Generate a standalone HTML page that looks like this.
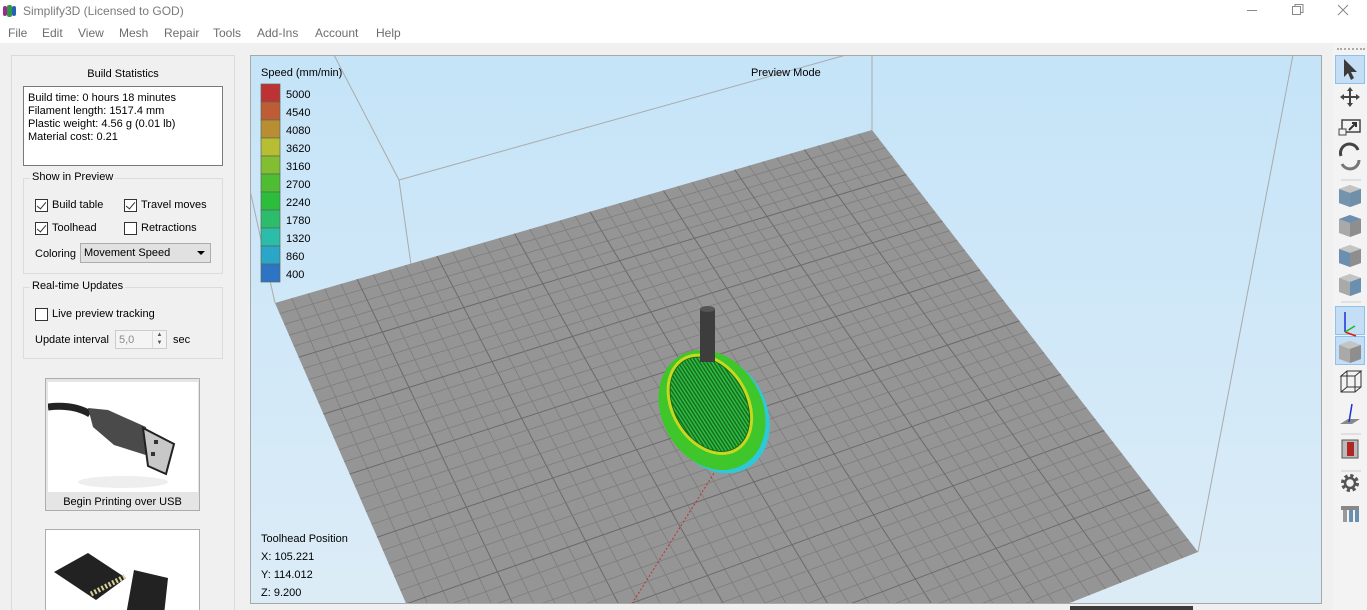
<!DOCTYPE html>
<html><head><meta charset="utf-8">
<style>
*{margin:0;padding:0;box-sizing:border-box}
html,body{width:1367px;height:610px;overflow:hidden}
body{background:#f0f0f0;font-family:"Liberation Sans",Arial,sans-serif;font-size:11px;color:#000;position:relative}
.abs{position:absolute}
.title{left:0;top:0;width:1367px;height:23px;background:#fff}
.menu{left:0;top:23px;width:1367px;height:20px;background:#fff;color:#6d6d6d;font-size:12px}
.menu span{position:absolute;top:3px}
.cb{position:absolute;width:13px;height:13px;border:1px solid #333;background:#fff}
.cb.on::after{content:"";position:absolute;left:3px;top:0px;width:4px;height:8px;border:solid #333;border-width:0 1.3px 1.3px 0;transform:rotate(40deg)}
.grp{position:absolute;border:1px solid #dcdcdc}
.grp .lg{position:absolute;top:-8px;left:6px;background:#f0f0f0;padding:0 2px;font-size:11px}
.tb{position:absolute;left:1335px;width:30px;height:29px}
.tb.hl{background:#c4dff5;border:1px solid #8fc1ea}
</style></head><body>
<div class="abs title">
 <svg class="abs" style="left:3px;top:4px" width="14" height="14"><rect x="0" y="2" width="4" height="10" rx="2" fill="#9b2a8c"/><rect x="4" y="1" width="5" height="12" rx="2" fill="#2f9a43"/><rect x="9" y="2" width="4" height="10" rx="2" fill="#2760b5"/></svg>
 <span class="abs" style="left:23px;top:4px;font-size:12px;color:#7a7a7a">Simplify3D (Licensed to GOD)</span>
 <div class="abs" style="left:1247px;top:10px;width:10px;height:1px;background:#888"></div>
 <svg class="abs" style="left:1292px;top:4px" width="12" height="12"><rect x="0.5" y="2.5" width="8" height="8" fill="none" stroke="#888"/><path d="M3 2.5V0.5H11V8.5H9" fill="none" stroke="#888"/></svg>
 <svg class="abs" style="left:1337px;top:4px" width="12" height="12"><path d="M1 1L11 11M11 1L1 11" stroke="#888"/></svg>
</div>
<div class="abs menu">
 <span style="left:8px">File</span><span style="left:42px">Edit</span><span style="left:78px">View</span><span style="left:119px">Mesh</span><span style="left:164px">Repair</span><span style="left:213px">Tools</span><span style="left:257px">Add-Ins</span><span style="left:315px">Account</span><span style="left:376px">Help</span>
</div>
<!-- left panel -->
<div class="abs" style="left:11px;top:55px;width:224px;height:555px;border:1px solid #dadada;border-bottom:0"></div>
<div class="abs" style="left:0;top:68px;width:246px;text-align:center;font-size:11px">Build Statistics</div>
<div class="abs" style="left:23px;top:86px;width:200px;height:80px;background:#fff;border:1px solid #7a7a7a;padding:5px 0 0 4px;line-height:13px;font-size:11px">Build time: 0 hours 18 minutes<br>Filament length: 1517.4 mm<br>Plastic weight: 4.56 g (0.01 lb)<br>Material cost: 0.21</div>
<div class="grp" style="left:23px;top:178px;width:200px;height:96px"><span class="lg">Show in Preview</span></div>
<div class="cb on" style="left:35px;top:199px"></div><span class="abs" style="left:52px;top:199px">Build table</span>
<div class="cb on" style="left:124px;top:199px"></div><span class="abs" style="left:141px;top:199px">Travel moves</span>
<div class="cb on" style="left:35px;top:222px"></div><span class="abs" style="left:52px;top:222px">Toolhead</span>
<div class="cb" style="left:124px;top:222px"></div><span class="abs" style="left:141px;top:222px">Retractions</span>
<span class="abs" style="left:35px;top:248px">Coloring</span>
<div class="abs" style="left:80px;top:243px;width:131px;height:20px;background:#e1e1e1;border:1px solid #adadad;padding:3px 0 0 3px">Movement Speed</div>
<div class="abs" style="left:197px;top:251px;border:4px solid transparent;border-top:4px solid #000;border-bottom:0"></div>
<div class="grp" style="left:23px;top:287px;width:200px;height:72px"><span class="lg">Real-time Updates</span></div>
<div class="cb" style="left:35px;top:308px"></div><span class="abs" style="left:52px;top:308px">Live preview tracking</span>
<span class="abs" style="left:35px;top:334px">Update interval</span>
<div class="abs" style="left:115px;top:330px;width:52px;height:19px;background:#f4f4f4;border:1px solid #ccc;color:#8a8a8a;padding:3px 0 0 3px">5,0</div>
<div class="abs" style="left:152px;top:331px;width:14px;height:17px;border-left:1px solid #ddd;font-size:6px;color:#555;text-align:center;line-height:8px">▲<br>▼</div>
<span class="abs" style="left:173px;top:334px">sec</span>
<div class="abs" style="left:45px;top:378px;width:155px;height:133px;border:1px solid #adadad;background:#e5e5e5">
 <div class="abs" style="left:2px;top:3px;width:150px;height:110px;background:#fff">
  <svg width="150" height="110"><path d="M0 25 Q25 22 42 32" stroke="#222" stroke-width="7" fill="none"/><path d="M40 26 L60 28 L98 45 L104 75 L66 63 L45 45Z" fill="#4a4a4a"/><path d="M95 46 L126 62 L118 92 L100 84Z" fill="#c8c8c8" stroke="#222" stroke-width="2"/><rect x="106" y="58" width="4" height="4" fill="#333"/><rect x="103" y="70" width="4" height="4" fill="#333"/><ellipse cx="75" cy="100" rx="45" ry="6" fill="#eee"/></svg>
 </div>
 <div class="abs" style="left:0;top:117px;width:153px;text-align:center">Begin Printing over USB</div>
</div>
<div class="abs" style="left:45px;top:529px;width:155px;height:81px;border:1px solid #adadad;border-bottom:0;background:#fff">
 <svg width="150" height="80"><path d="M8 42 L42 23 L80 48 L50 70Z" fill="#222"/><path d="M45 64 L80 46" stroke="#d8cf9a" stroke-width="5" stroke-dasharray="2 2"/><path d="M88 40 L122 48 L118 85 L80 85Z" fill="#222"/></svg>
</div>
<!-- viewport -->
<div class="abs" style="left:250px;top:55px;width:1072px;height:549px;border:1px solid #a8a8a8;background:linear-gradient(#c5e4f8,#dcecf7);overflow:hidden">
<svg id="vp" width="1072" height="549" style="position:absolute;left:-1px;top:-1px"></svg>
<div class="abs" style="left:10px;top:11px;font-size:11px">Speed (mm/min)</div>
<div class="abs" style="left:500px;top:11px;font-size:11px">Preview Mode</div>
<div class="abs" style="left:10px;top:474px;line-height:18px">Toolhead Position<br>X: 105.221<br>Y: 114.012<br>Z: 9.200</div>
</div>
<div class="abs" style="left:1070px;top:606px;width:123px;height:4px;background:#3c3c3c"></div>
<!-- toolbar -->
<div class="abs" style="left:1333px;top:44px;width:34px;height:566px;background:#f3f3f3"></div>
<div class="abs" style="left:1337px;top:48px;width:28px;height:2px;border-top:2px dotted #aaa"></div>
<div class="tb hl" style="top:55px"></div><div class="tb hl" style="top:306px"></div><div class="tb hl" style="top:336px"></div>
<svg class="abs" style="left:1333px;top:44px" width="34" height="490">
 <defs>
  <g id="cube"><path d="M17 0 L28 4 L28 18 L17 22 L6 18 L6 4Z" fill="#a9a9a9"/><path d="M6 4 L17 8 L28 4 L17 0Z" fill="#c4c4c4"/><path d="M17 8 L28 4 L28 18 L17 22Z" fill="#8e8e8e"/></g>
 </defs>
 <path d="M11 15 L11 33 L15 29 L18 36 L21 34 L18 28 L24 28Z" fill="#3a3a3a"/>
 <g fill="#444"><path d="M17 43l-3 4h6zM17 63l-3-4h6zM7 53l4-3v6zM27 53l4 0 0 0zM27 53l-4-3v6z"/><rect x="16" y="46" width="2" height="14"/><rect x="10" y="52" width="14" height="2"/></g>
 <rect x="9" y="76" width="18" height="12" fill="none" stroke="#444" stroke-width="1.5"/><rect x="6" y="85" width="7" height="6" fill="#f3f3f3" stroke="#444"/><path d="M16 86l7-7m-4 0h4v4" stroke="#333" stroke-width="2" fill="none"/>
 <path d="M8 112 a9 9 0 0 1 17 -6" stroke="#444" stroke-width="3" fill="none"/><path d="M26 116 a9 9 0 0 1 -17 4" stroke="#777" stroke-width="3" fill="none"/>
 <line x1="8" y1="136" x2="28" y2="136" stroke="#ccc"/>
 <use href="#cube" y="141"/><path d="M6 145 L17 149 L28 145 L28 159 L17 163 L6 159Z" fill="#6b8fae" opacity=".85"/>
 <use href="#cube" y="171"/><path d="M6 175 L17 179 L28 175 L17 171Z" fill="#6b8fae"/>
 <use href="#cube" y="201"/><path d="M6 205 L17 209 L17 223 L6 219Z" fill="#6b8fae"/>
 <use href="#cube" y="230"/><path d="M17 238 L28 234 L28 248 L17 252Z" fill="#6b8fae"/>
 <line x1="8" y1="258" x2="28" y2="258" stroke="#ccc"/>
 <path d="M12 268v20" stroke="#1c2fd8" stroke-width="1.5"/><path d="M12 288l11 4" stroke="#d81c1c" stroke-width="1.5"/><path d="M12 288l10-6" stroke="#1cb81c" stroke-width="1.5"/>
 <use href="#cube" y="297"/>
 <path d="M8 332h14l6-5H14zM8 332v16h14v-16M22 348l6-5v-16M14 327v16h14M14 343l-6 5" stroke="#333" fill="none"/>
 <path d="M7 380l8-5h12l-8 5z" fill="#888"/><path d="M16 378l3-18" stroke="#1c2fd8" stroke-width="1.5"/>
 <line x1="8" y1="390" x2="28" y2="390" stroke="#ccc"/>
 <rect x="9" y="396" width="16" height="18" fill="#bbb" stroke="#555"/><rect x="14" y="398" width="7" height="14" fill="#b02525"/>
 <line x1="8" y1="427" x2="28" y2="427" stroke="#ccc"/>
 <circle cx="17" cy="439" r="7" fill="none" stroke="#555" stroke-width="4" stroke-dasharray="3 2.5"/><circle cx="17" cy="439" r="5" fill="none" stroke="#555" stroke-width="2.5"/>
 <path d="M8 462h18v4H8z" fill="#888"/><rect x="10" y="466" width="4" height="12" fill="#999"/><rect x="16" y="466" width="4" height="12" fill="#6b8fae"/><rect x="22" y="466" width="4" height="12" fill="#6b8fae"/>
</svg>
<script>
(function(){
var s=document.getElementById('vp'),ox=250,oy=55,h='';
function P(x,y){return (x-ox)+','+(y-oy)}
var L=[[334,55,399,180],[399,180,846,55],[872,55,872,130],[399,180,460,610],[250,190,275,303],[1293,55,1198,552]];
L.forEach(function(l){h+='<line x1="'+(l[0]-ox)+'" y1="'+(l[1]-oy)+'" x2="'+(l[2]-ox)+'" y2="'+(l[3]-oy)+'" stroke="#aaa" stroke-width="1"/>';});
var A=[275,303],B=[872,130],C=[1198,552],D=[504,828];
var x0=A[0],y0=A[1],x1=B[0],y1=B[1],x2=C[0],y2=C[1],x3=D[0],y3=D[1];
var dx1=x1-x2,dx2=x3-x2,dy1=y1-y2,dy2=y3-y2,sx=x0-x1+x2-x3,sy=y0-y1+y2-y3;
var den=dx1*dy2-dx2*dy1,g=(sx*dy2-dx2*sy)/den,hh=(dx1*sy-sx*dy1)/den;
var a=x1-x0+g*x1,b=x3-x0+hh*x3,c=x0,d=y1-y0+g*y1,e=y3-y0+hh*y3,f=y0;
function M(u,v){var w=g*u+hh*v+1;return [(a*u+b*v+c)/w,(d*u+e*v+f)/w];}
h+='<polygon points="'+P(A[0],A[1])+' '+P(B[0],B[1])+' '+P(C[0],C[1])+' '+P(D[0],D[1])+'" fill="#959595"/>';
var N=40;
for(var i=1;i<N;i++){var t=i/N,maj=i%5==0;var st=maj?'stroke="#6a6a6a" stroke-width="1"':'stroke="#7d7d7d" stroke-width="0.8"';
var p=M(t,0),q=M(t,1);h+='<line x1="'+(p[0]-ox)+'" y1="'+(p[1]-oy)+'" x2="'+(q[0]-ox)+'" y2="'+(q[1]-oy)+'" '+st+'/>';
p=M(0,t);q=M(1,t);h+='<line x1="'+(p[0]-ox)+'" y1="'+(p[1]-oy)+'" x2="'+(q[0]-ox)+'" y2="'+(q[1]-oy)+'" '+st+'/>';}
h+='<line x1="'+(716-ox)+'" y1="'+(470-oy)+'" x2="'+(628-ox)+'" y2="'+(610-oy)+'" stroke="#c03030" stroke-dasharray="2 2"/>';
var cx=712-ox,cy=410-oy;
h+='<defs><clipPath id="ce"><ellipse cx="1" cy="-6" rx="35" ry="50"/></clipPath></defs>';
h+='<g transform="translate('+cx+','+cy+') rotate(-30)">';
h+='<ellipse cx="2" cy="5" rx="50" ry="63" fill="#2ec8d8"/>';
h+='<ellipse cx="0" cy="0" rx="50" ry="63" fill="#3ec62a"/>';
h+='<ellipse cx="1" cy="-6" rx="39" ry="54" fill="#c8d820"/>';
h+='<ellipse cx="1" cy="-6" rx="36" ry="51" fill="#156e15"/>';
for(var k=-40;k<40;k+=3){h+='<line x1="'+k+'" y1="-60" x2="'+(k+6)+'" y2="60" stroke="#2fb84a" stroke-width="1.6" clip-path="url(#ce)"/>';}
h+='</g>';
h+='<rect x="'+(700-ox)+'" y="'+(309-oy)+'" width="15" height="53" fill="#3d3d3d"/><ellipse cx="'+(707.5-ox)+'" cy="'+(309-oy)+'" rx="7.5" ry="3" fill="#555"/>';
var cols=['#be3236','#bd5c35','#b98d32','#b7be32','#83bd32','#4ebd32','#2cbd3c','#2cbd6c','#2cbdaa','#2aa6c8','#2e74c4'],lab=['5000','4540','4080','3620','3160','2700','2240','1780','1320','860','400'];
for(var j=0;j<11;j++){h+='<rect x="11" y="'+(29+j*18)+'" width="19" height="18" fill="'+cols[j]+'" stroke="#5a6a5a" stroke-width="0.7"/><text x="36" y="'+(43+j*18)+'" font-family="Liberation Sans" font-size="11">'+lab[j]+'</text>';}
s.innerHTML=h;
})();
</script>
</body></html>
